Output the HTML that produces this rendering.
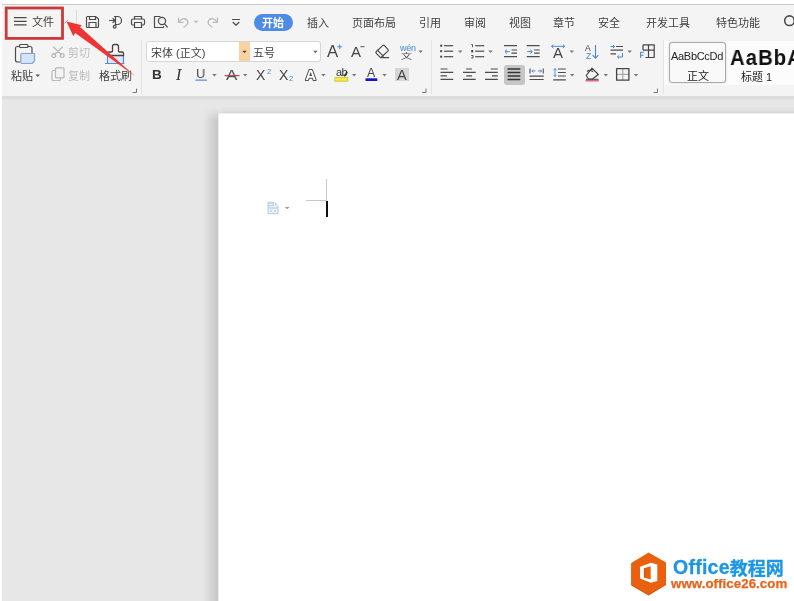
<!DOCTYPE html>
<html lang="zh-CN">
<head>
<meta charset="utf-8">
<title>WPS 文字</title>
<style>
html,body{margin:0;padding:0;background:#fff;}
body{width:794px;height:601px;overflow:hidden;position:relative;font-family:"Liberation Sans","Noto Sans CJK SC",sans-serif;font-size:12px;color:#333;}
.abs{position:absolute;}
#ribbon{position:absolute;left:2px;top:5px;width:792px;height:91px;background:#f4f4f4;}
#topline{position:absolute;left:2px;top:4px;width:792px;height:1px;background:#c8c9ca;}
#work{position:absolute;left:2px;top:96px;width:792px;height:505px;background:#e7e7e7;}
#page{position:absolute;left:219px;top:113px;width:575px;height:488px;background:#fff;}
#shl{position:absolute;left:202px;top:108px;width:16px;height:493px;background:linear-gradient(to right,rgba(0,0,0,0) 0%,rgba(0,0,0,0.045) 35%,rgba(0,0,0,0.105) 75%,rgba(0,0,0,0.14) 100%);-webkit-mask-image:linear-gradient(to bottom,transparent 0,#000 13px);mask-image:linear-gradient(to bottom,transparent 0,#000 13px);}
#sht{position:absolute;left:216px;top:106px;width:578px;height:7px;background:linear-gradient(to bottom,rgba(0,0,0,0) 0%,rgba(0,0,0,0.035) 70%,rgba(0,0,0,0.075) 100%);-webkit-mask-image:linear-gradient(to right,transparent 0,#000 8px);mask-image:linear-gradient(to right,transparent 0,#000 8px);}
#band{position:absolute;left:2px;top:96px;width:792px;height:4px;background:linear-gradient(#dbdbdb 0,#dcdcdc 55%,#e6e6e6 100%);}
.t{will-change:transform;position:absolute;white-space:nowrap;line-height:14px;font-size:11px;color:#404040;}
.g{color:#bdbdbd;}
svg{position:absolute;overflow:visible;will-change:transform;}
</style>
</head>
<body>
<div id="topline"></div>
<div id="ribbon"></div>
<div id="work"></div>
<div id="band"></div>
<div id="shl"></div><div id="sht"></div>
<div id="page"></div>
<div class="abs" style="left:218px;top:114px;width:1px;height:487px;background:#ebebeb;"></div>
<div class="abs" style="left:219px;top:113px;width:575px;height:1px;background:#f1f1f1;"></div>

<!-- TAB ROW -->
<svg style="left:0;top:0" width="80" height="45" viewBox="0 0 80 45"><rect x="6.200" y="8" width="56.300" height="30.400" fill="#f6f3f3" stroke="#c93b3b" stroke-width="2.800"/></svg>
<svg style="left:13.600px;top:17px" width="13" height="10" viewBox="0 0 13 10"><path d="M0 0.600H12.600M0 4.400H12.600M0 7.800H12.600" stroke="#4a4a4a" stroke-width="1.200" fill="none"/></svg>
<div class="t" style="left:31.500px;top:14.800px;">文件</div>
<svg style="left:64px;top:19px" width="8" height="6" viewBox="0 0 8 6"><path d="M0.500 4.500L3.500 1.200" stroke="#999" stroke-width="1" fill="none"/></svg>
<div class="abs" style="left:76.300px;top:10px;width:1px;height:23px;background:#dadada;"></div>

<div class="abs" style="left:253.700px;top:13.700px;width:39.500px;height:17px;border-radius:8.500px;background:#4d8be6;"></div>
<div class="t" style="left:262px;top:15.600px;color:#fff;font-weight:bold;">开始</div>
<div class="t" style="left:307px;top:15.800px;">插入</div>
<div class="t" style="left:352px;top:15.800px;">页面布局</div>
<div class="t" style="left:419px;top:15.800px;">引用</div>
<div class="t" style="left:464px;top:15.800px;">审阅</div>
<div class="t" style="left:509px;top:15.800px;">视图</div>
<div class="t" style="left:553px;top:15.800px;">章节</div>
<div class="t" style="left:598px;top:15.800px;">安全</div>
<div class="t" style="left:646px;top:15.800px;">开发工具</div>
<div class="t" style="left:716px;top:15.800px;">特色功能</div>


<!-- ICONS: QUICK ACCESS -->
<svg style="left:0;top:0" width="794" height="601" viewBox="0 0 794 601" fill="none" stroke-linecap="round" stroke-linejoin="round">
<g stroke="#4c4c4c" stroke-width="1.2">
<!-- save -->
<path d="M87.5 16.5H95.5L98.5 19V26.5A1 1 0 0 1 97.5 27.5H87.5A1 1 0 0 1 86.500 26.5V17.5A1 1 0 0 1 87.5 16.5Z"/>
<path d="M89.5 16.800V19.500H95.500V16.800M89 27.500V22.500H96V27.500"/>
<!-- export pdf -->
<path d="M109.500 20.500H115M113 18.500L115.200 20.500L113 22.500"/>
<path d="M114.500 16.500H117.500A4 4 0 0 1 117.500 24.500H115.500V16.500"/>
<path d="M115.500 24.500V25.500"/>
<circle cx="114.700" cy="26.700" r="1.400"/>
<!-- print -->
<path d="M134.500 19V16.500H141.500V19"/>
<path d="M134.500 25H133A1.500 1.500 0 0 1 131.500 23.500V20.500A1.500 1.500 0 0 1 133 19H143A1.500 1.500 0 0 1 144.500 20.500V23.500A1.500 1.500 0 0 1 143 25H141.500"/>
<path d="M134.500 22.500H141.500V27.500H134.500Z"/>
<!-- preview -->
<path d="M160 16.500H154.500V27.500H163.500V26.500"/>
<circle cx="162" cy="21" r="3.600"/>
<path d="M164.600 23.800L167.200 27"/>
<!-- qat dropdown -->
<path d="M232.500 19.500H239.500M233 22.300L236 25.200L239 22.300"/>
<!-- search -->
<circle cx="789.500" cy="20.700" r="4.800" stroke-width="1.600"/>
</g>
<g stroke="#bcbcbc" stroke-width="1.300">
<!-- undo -->
<path d="M178.500 17.800V22.300H183"/>
<path d="M178.800 22.100C181 18.500 185 17.800 187 20C189 22.500 187.500 25 184 27"/>
<!-- redo -->
<path d="M217.500 17.800V22.300H213"/>
<path d="M217.200 22.100C215 18.500 211 17.800 209 20C207 22.500 208.500 25 212 27"/>
</g>
<path d="M193.500 20.800H198.500L196 23.300Z" fill="#bcbcbc"/>
</svg>

<!-- SEPARATORS -->
<div class="abs" style="left:141px;top:40px;width:1px;height:54px;background:#e4e4e4;"></div>
<div class="abs" style="left:431px;top:40px;width:1px;height:54px;background:#e4e4e4;"></div>
<div class="abs" style="left:662.500px;top:40px;width:1px;height:54px;background:#e4e4e4;"></div>
<!-- CLIPBOARD -->
<div class="t" style="left:11px;top:69px;">粘贴</div>
<div class="t g" style="left:68px;top:45.500px;">剪切</div>
<div class="t g" style="left:68px;top:68.500px;">复制</div>
<div class="t" style="left:99px;top:69px;">格式刷</div>


<!-- ICONS: CLIPBOARD + FONT -->
<svg style="left:0;top:0" width="794" height="601" viewBox="0 0 794 601" fill="none" stroke-linecap="round" stroke-linejoin="round">
<!-- paste -->
<g stroke="#4c4c4c" stroke-width="1.200">
<path d="M19.500 46.500H17.500A2 2 0 0 0 15.500 48.500V60A2 2 0 0 0 17.500 62H20"/>
<path d="M28 46.500H30A2 2 0 0 1 32 48.500V53"/>
<rect x="19.500" y="44.500" width="8.500" height="3" rx="1"/>
</g>
<path d="M22 53.500H34.500V61L32 63.500H22A1.200 1.200 0 0 1 20.800 62.300V54.700A1.200 1.200 0 0 1 22 53.500Z" fill="#d6e4f8" stroke="#7fa3d8" stroke-width="1.200"/>
<path d="M35.500 74.500H40L37.750 76.900Z" fill="#555"/>
<!-- scissors -->
<g stroke="#b8b8b8" stroke-width="1.200">
<path d="M53.500 47L61.500 54.500M62.500 47L54.500 54.500"/>
<circle cx="53.800" cy="55.600" r="1.900"/>
<circle cx="62.200" cy="55.600" r="1.900"/>
<!-- copy -->
<rect x="55.500" y="67.800" width="8.500" height="10" rx="1"/>
<path d="M55.500 70.500H53A1 1 0 0 0 52 71.500V79.500A1 1 0 0 0 53 80.500H59.500A1 1 0 0 0 60.500 79.500V78"/>
</g>
<!-- format brush -->
<path d="M107.500 55.500H123.500V63.500H107.500Z" fill="#dde8f8" stroke="none"/>
<path d="M107.500 55.500V63.500M123.500 55.500V63.500M105.500 63.500H124" stroke="#5b8dd6" stroke-width="1.200"/>
<path d="M107.500 55.500V53.500A1.500 1.500 0 0 1 109 52H111.500A1 1 0 0 0 112.500 51V46.500A2 2 0 0 1 114.500 44.500H116.500A2 2 0 0 1 118.500 46.500V51A1 1 0 0 0 119.500 52H122A1.500 1.500 0 0 1 123.500 53.500V55.500H107.500" stroke="#444" stroke-width="1.300"/>
<!-- launchers -->
<g stroke="#777" stroke-width="1">
<path d="M136.500 89V92.500H133"/>
<path d="M426 89V92.500H422.500"/>
<path d="M657.500 89V92.500H654"/>
</g>
</svg>

<!-- FONT -->
<div class="abs" style="left:146px;top:41px;width:103px;height:19px;background:#fff;border:1px solid #d6d6d6;border-radius:3px 0 0 3px;"></div>
<div class="abs" style="left:239px;top:42px;width:11px;height:19px;background:#f8d2a0;"></div>
<div class="abs" style="left:250px;top:41px;width:70px;height:19px;background:#fff;border:1px solid #d6d6d6;border-left:none;border-radius:0 3px 3px 0;"></div>
<div class="t" style="left:151px;top:45.500px;">宋体 (正文)</div>
<div class="t" style="left:253px;top:45.500px;">五号</div>


<!-- ICONS: FONT ROWS -->
<svg style="left:0;top:0" width="794" height="601" viewBox="0 0 794 601" fill="none" stroke-linecap="round" stroke-linejoin="round">
<path d="M242.3 50.8H246.70000000000002L244.5 53.199999999999996Z" fill="#5a4630" stroke="none"/><path d="M313.2 50.8H317.59999999999997L315.4 53.199999999999996Z" fill="#666" stroke="none"/><path d="M337.800 46.800H341.600M339.700 44.900V48.700" stroke="#4a86d8" stroke-width="1"/><path d="M360.800 46.700H364.200" stroke="#555" stroke-width="1"/><g stroke="#4c4c4c" stroke-width="1.200"><rect x="-5.600" y="-3.800" width="11.200" height="7.600" rx="1.300" transform="translate(382.100,51.300) rotate(-43)"/><path d="M377.700 50.300L383.200 56.200"/><path d="M380.800 57.700H388.600"/></g><path d="M418.4 50.6H422.79999999999995L420.59999999999997 53.0Z" fill="#777" stroke="none"/><path d="M196 80.200H206.500" stroke="#5b8dd6" stroke-width="1.200"/><path d="M212.2 74H216.6L214.39999999999998 76.4Z" fill="#777" stroke="none"/><path d="M225 75.600H239.200" stroke="#d9435a" stroke-width="1.100"/><path d="M243 74H247.4L245.2 76.4Z" fill="#777" stroke="none"/><path d="M321.2 74H325.59999999999997L323.4 76.4Z" fill="#777" stroke="none"/><rect x="335.200" y="77.600" width="12.600" height="3.600" fill="#f8ee3e" stroke="#c8b820" stroke-width="0.800"/><path d="M343.300 75.800L346.800 71.200L348 72.200L344.800 76.800Z" fill="#444" stroke="none"/><path d="M352 74H356.4L354.2 76.4Z" fill="#777" stroke="none"/><rect x="365.500" y="78.300" width="11.800" height="2.700" fill="#1414c8" stroke="none"/><path d="M382.3 74H386.7L384.5 76.4Z" fill="#777" stroke="none"/></svg>

<div class="t" style="left:326.500px;top:42px;font-size:16.700px;line-height:20px;color:#444;">A</div>
<div class="t" style="left:351px;top:43px;font-size:15px;line-height:18px;color:#444;">A</div>
<div class="t" style="left:399.500px;top:43px;font-size:9px;line-height:10px;color:#4a86d8;letter-spacing:-0.3px;">wén</div>
<div class="t" style="left:401px;top:51.500px;font-size:11px;line-height:12px;color:#444;transform:scaleY(0.700);transform-origin:0 0;">文</div>
<div class="t" style="left:151.800px;top:65.600px;font-size:13.500px;line-height:18px;font-weight:bold;color:#333;">B</div>
<div class="t" style="left:176px;top:65px;font-size:16px;line-height:20px;font-style:italic;font-family:'Liberation Serif',serif;color:#333;">I</div>
<div class="t" style="left:196px;top:65px;font-size:13.500px;line-height:18px;color:#444;transform:scaleX(0.95);transform-origin:0 0;">U</div>
<div class="t" style="left:226.300px;top:64.800px;font-size:15.500px;line-height:20px;color:#555;transform:scaleX(1.1);transform-origin:0 0;">A</div>
<div class="t" style="left:256px;top:66px;font-size:14px;line-height:18px;color:#444;">X</div>
<div class="t" style="left:266.500px;top:67px;font-size:7.500px;line-height:9px;color:#4a86d8;">2</div>
<div class="t" style="left:278.500px;top:66px;font-size:14px;line-height:18px;color:#444;">X</div>
<div class="t" style="left:289px;top:73.500px;font-size:7.500px;line-height:9px;color:#4a86d8;">2</div>
<svg style="left:300px;top:64px" width="22" height="22" viewBox="0 0 22 22"><text x="5.400" y="16" font-family="Liberation Sans, sans-serif" font-size="14.500" font-weight="bold" fill="#fff" stroke="#505050" stroke-width="2.100" stroke-linejoin="round" paint-order="stroke">A</text></svg>
<div class="t" style="left:335.500px;top:64.500px;font-size:11px;line-height:14px;color:#333;letter-spacing:-0.5px;">ab</div>
<div class="t" style="left:367.300px;top:65.400px;font-size:12.300px;line-height:16px;color:#444;">A</div>
<div class="abs" style="left:395px;top:68px;width:13.500px;height:13px;background:#d6d6d6;"></div>
<div class="t" style="left:396.500px;top:66px;font-size:14.500px;line-height:18px;color:#444;">A</div>


<!-- ICONS: PARAGRAPH -->
<div class="abs" style="left:503.500px;top:64.500px;width:21.500px;height:20px;background:#c6c6c6;border-radius:3px;"></div>
<svg style="left:0;top:0" width="794" height="601" viewBox="0 0 794 601" fill="none" stroke-linecap="butt" stroke-linejoin="round">
<g stroke="#4c4c4c" stroke-width="1.200"><path d="M444 45.7H453.200"/><path d="M444 51.2H453.200"/><path d="M444 56.7H453.200"/></g><rect x="440.200" y="44.7" width="2" height="2" fill="#444"/><rect x="440.200" y="50.2" width="2" height="2" fill="#444"/><rect x="440.200" y="55.7" width="2" height="2" fill="#444"/><path d="M458 50.6H462.4L460.2 53.0Z" fill="#777" stroke="none"/><g stroke="#4c4c4c" stroke-width="1.200"><path d="M475.200 45.7H484.200"/><path d="M475.200 51.2H484.200"/><path d="M475.200 56.7H484.200"/></g><path d="M471.300 44.500H472.500V47.200" stroke="#444" stroke-width="0.900"/><rect x="471.200" y="50" width="2" height="2.400" fill="#444"/><path d="M471.200 55.500H473V58H471.200" stroke="#444" stroke-width="0.900"/><path d="M488.3 50.6H492.7L490.5 53.0Z" fill="#777" stroke="none"/><g stroke="#4c4c4c" stroke-width="1.200"><path d="M504 45.700H517M504 56.700H517M511.500 50H517M511.500 53.200H517"/></g><path d="M505 51.600H509.800M507 49.500L504.900 51.600L507 53.700" stroke="#4a86d8" stroke-width="1"/><g stroke="#4c4c4c" stroke-width="1.200"><path d="M526.700 45.700H539.700M526.700 56.700H539.700M534.200 50H539.700M534.200 53.200H539.700"/></g><path d="M527.200 51.600H532.200M530.200 49.500L532.300 51.600L530.200 53.700" stroke="#4a86d8" stroke-width="1"/><path d="M551.500 46.300H564.800M553.400 44.600L551.500 46.300L553.400 48M562.900 44.600L564.800 46.300L562.900 48" stroke="#4a86d8" stroke-width="1"/><path d="M569.6 50.6H574.0L571.8000000000001 53.0Z" fill="#777" stroke="none"/><path d="M595.500 45V58M592.600 55.200L595.500 58.200L598.400 55.200" stroke="#4a86d8" stroke-width="1.100"/><g stroke="#4c4c4c" stroke-width="1.200"><path d="M616 46.500H623M610.500 50.200H623M610.500 53.800H616"/></g><path d="M610.500 46.500H614.500M613 45L614.600 46.500L613 48" stroke="#4a86d8" stroke-width="1"/><path d="M622.500 53V57H617.500M619.200 55.300L617.400 57L619.200 58.700" stroke="#4a86d8" stroke-width="1"/><path d="M627.5 50.6H631.9L629.7 53.0Z" fill="#777" stroke="none"/><g stroke="#444" stroke-width="1.200"><path d="M643 44.800H654.200V57.500H645.500M643 44.800V50M648.500 44.800V57.500M643 50.200H654.200"/></g><path d="M644 52.300H640.600V58M640.600 55.200H643.500" stroke="#4a86d8" stroke-width="1.100"/><g stroke="#4c4c4c" stroke-width="1.200"><path d="M440.500 69H447.500M440.500 72.400H453.200M440.500 75.900H447M440.500 79.300H453.200"/><path d="M466.200 69H472M463 72.400H475.700M466.200 75.900H472M463 79.300H475.700"/><path d="M490.700 69H497.800M485 72.400H497.800M492 75.900H497.800M485 79.300H497.800"/></g><g stroke="#333" stroke-width="1.600"><path d="M507.600 69H520.300M507.600 72.500H520.300M507.600 76H520.300M507.600 79.500H520.300"/></g><g stroke="#4c4c4c" stroke-width="1.200"><path d="M529.500 76.200H543.700M529.500 79.500H543.700"/><path d="M530 68.500V73.500M543.200 68.500V73.500" stroke-width="1.100"/></g><path d="M531.800 71H535.500M533.300 69.500L531.800 71L533.300 72.500M537.800 71H541.500M540 69.500L541.500 71L540 72.500" stroke="#4a86d8" stroke-width="0.900"/><g stroke="#4c4c4c" stroke-width="1.200"><path d="M558 69H565.800M558 72.500H565.800M558 76H565.800M553.200 79.800H565.800"/></g><path d="M555 68.500V76.500M553.500 70.200L555 68.500L556.500 70.200M553.500 74.800L555 76.500L556.500 74.800" stroke="#4a86d8" stroke-width="0.900"/><path d="M570 74H574.4L572.2 76.4Z" fill="#777" stroke="none"/><g stroke="#444" stroke-width="1.200"><path d="M592 68.200L598.300 74.500L592.500 79H588.500L586.200 75.500Z"/><path d="M587 71.500C589 69.800 592 70.300 593 72"/></g><path d="M585.500 80.800H598.800" stroke="#d9435a" stroke-width="1.200"/><path d="M586 79.300H598.500" stroke="#444" stroke-width="1"/><path d="M603.6 74H608.0L605.8000000000001 76.4Z" fill="#777" stroke="none"/><path d="M622.800 68.500V80M616.500 74.300H629" stroke="#999" stroke-width="1"/><rect x="616.600" y="68.600" width="12.300" height="11.600" stroke="#444" stroke-width="1.300"/><path d="M633.8 74H638.1999999999999L636.0 76.4Z" fill="#777" stroke="none"/></svg>

<div class="t" style="left:552.500px;top:45px;font-size:15px;line-height:16px;color:#444;">A</div>
<div class="t" style="left:585px;top:43px;font-size:8.500px;line-height:10px;color:#444;">A</div>
<div class="t" style="left:585.500px;top:50.800px;font-size:8.500px;line-height:10px;color:#4a86d8;">Z</div>

<!-- STYLES -->
<div class="abs" style="left:664px;top:41px;width:130px;height:44px;background:#fcfcfc;"></div>
<div class="abs" style="left:669.300px;top:41.800px;width:54.600px;height:39.500px;background:#f9f9f9;border:1.300px solid #a9a9a9;border-radius:3px;box-shadow:0 0 2px rgba(0,0,0,0.22);"></div>
<div class="t" style="left:671px;top:49.300px;font-size:11px;color:#222;letter-spacing:-0.300px;">AaBbCcDd</div>
<div class="t" style="left:687px;top:69px;color:#222;">正文</div>
<div class="t" style="left:729.800px;top:44px;font-size:22.500px;line-height:28px;font-weight:bold;color:#111;letter-spacing:1.200px;transform:scaleX(0.900);transform-origin:0 0;">AaBbA</div>
<div class="t" style="left:741px;top:69.700px;color:#222;">标题 1</div>

<!-- PAGE CONTENT -->
<div class="abs" style="left:326.300px;top:178.500px;width:1px;height:22.500px;background:#c9c9c9;"></div>
<div class="abs" style="left:305.500px;top:200px;width:21.500px;height:1px;background:#c9c9c9;"></div>
<div class="abs" style="left:326.200px;top:200.800px;width:1.700px;height:16px;background:#111;"></div>


<!-- PAGE ICON + LOGO -->
<svg style="left:0;top:0" width="794" height="601" viewBox="0 0 794 601" fill="none">
<path d="M267.500 201.800H274.500L278.500 205.500V214.200H267.500Z" fill="#c3d0ea" stroke="none"/>
<path d="M274.300 201.800V205.800H278.500" stroke="#fff" stroke-width="0.800"/>
<path d="M269 204.300H272.500M269 206.800H276.500M269.300 209.200H272.300V212.500H269.300ZM273.700 209.200H276.700V212.500H273.700Z" stroke="#fff" stroke-width="0.900"/>
<path d="M284.800 206.900H289.600L287.200 209.300Z" fill="#999"/>
<!-- hexagon -->
<path d="M648.600 553.400L666 563V585L648.600 595.600L631.300 585.400V563.500Z" fill="#c9510c"/>
<path d="M648.600 552.500L666 562.500V584.200L648.600 594.400L631.300 584.600V563Z" fill="#e9610e"/>
<path d="M640.100 566.700L651 562.800L657.300 564.600V580.900L651 582.800L640.100 578.400ZM643.900 568.200V577.400L650.700 579.500V566.200Z" fill="#fff" fill-rule="evenodd"/>
<path d="M644.700 568.300V577.400" stroke="#c9510c" stroke-width="0.800"/>
</svg>

<!-- WATERMARK -->
<div class="t" style="left:672.500px;top:553.500px;font-size:19.500px;line-height:26px;font-weight:bold;color:#1e96e0;letter-spacing:0.250px;-webkit-text-stroke:0.300px #1e96e0;">Office<span style="font-size:18px;letter-spacing:0;position:relative;top:0.800px;">教程网</span></div>
<div class="t" style="left:670.600px;top:574.500px;font-size:13.300px;line-height:18px;font-weight:bold;color:#e8641b;letter-spacing:0.050px;-webkit-text-stroke:0.250px #e8641b;">www.office26.com</div>

<!-- ARROW -->
<svg style="left:0;top:0" width="794" height="601" viewBox="0 0 794 601"><polygon points="66.500,21.500 81.800,25.300 80,27 135.500,76.500 75.300,33 73.200,35.900" fill="#f03434"/></svg>
</body>
</html>
